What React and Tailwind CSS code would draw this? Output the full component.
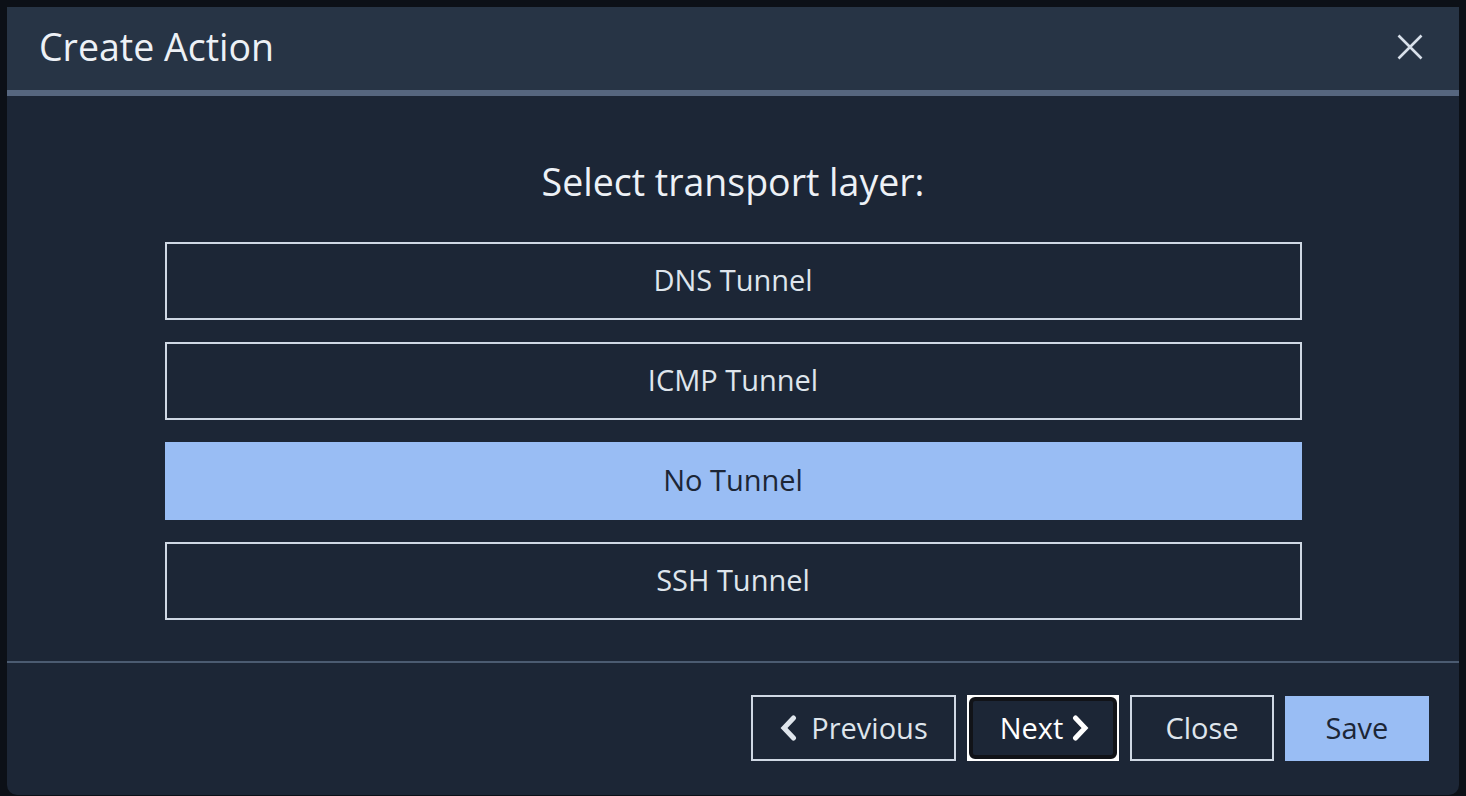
import React, { useState } from 'react';

const options = ['DNS Tunnel', 'ICMP Tunnel', 'No Tunnel', 'SSH Tunnel'];

const Chevron = ({ dir }) => (
  <svg width="18" height="26" viewBox="0 0 18 26" className="shrink-0">
    <path
      d={dir === 'left' ? 'M14.5 3 5 13 14.5 23' : 'M3.5 3 13 13 3.5 23'}
      stroke="currentColor"
      strokeWidth="5"
      strokeLinejoin="miter"
      strokeLinecap="round"
      fill="none"
    />
  </svg>
);

const App = () => {
  const [selected, setSelected] = useState('No Tunnel');

  return (
    <div
      className="w-[1466px] h-[796px] overflow-hidden bg-[#0c1017] pt-[7px] pl-[7px]"
      style={{ fontFamily: '"Open Sans", "Noto Sans", sans-serif' }}
    >
      {/* Modal */}
      <div className="w-[1452px] h-[788px] flex flex-col bg-[#1c2636] rounded-b-[10px] overflow-hidden">
        {/* Header */}
        <div className="h-[83px] shrink-0 bg-[#273445] flex items-center justify-between pl-[32px] pr-[36px] pb-[3px]">
          <h1 className="text-[37.5px] leading-none text-[#edf1f6]">Create Action</h1>
          <svg width="26" height="26" viewBox="0 0 26 26" className="text-[#d8e0ea]">
            <path d="M1.5 1.5 24.5 24.5M24.5 1.5 1.5 24.5" stroke="currentColor" strokeWidth="2.6" fill="none" />
          </svg>
        </div>
        <div className="h-[6px] shrink-0 bg-[#56667f]" />

        {/* Body */}
        <div className="flex flex-col items-center pt-[62px] pb-[41px]">
          <h2 className="text-[37.5px] leading-[48px] text-[#edf1f6]">Select transport layer:</h2>
          <div className="mt-[36px] w-[1137px] flex flex-col gap-[22px]">
            {options.map((opt) => (
              <button
                key={opt}
                onClick={() => setSelected(opt)}
                className={
                  selected === opt
                    ? 'h-[78px] w-full flex items-center justify-center pb-[2px] bg-[#99bdf4] text-[#1c2636] text-[29px]'
                    : 'h-[78px] w-full flex items-center justify-center pb-[2px] border-2 border-[#cfd8e4] text-[#dfe5ec] text-[29px]'
                }
              >
                {opt}
              </button>
            ))}
          </div>
        </div>

        {/* Footer */}
        <div className="h-[2px] shrink-0 bg-[#4b5b71]" />
        <div className="flex-1 flex items-center justify-end pr-[30px] pb-[2px] gap-[11px]">
          <button className="w-[205px] h-[66px] border-2 border-[#cfd8e4] flex items-center justify-center gap-[14px] text-[29px] text-[#dfe5ec]">
            <Chevron dir="left" />
            <span>Previous</span>
          </button>
          <div className="w-[152px] h-[66px] bg-white p-[2px]">
            <button className="w-full h-full rounded-[6px] border-[4px] border-[#111318] bg-[#1c2636] flex items-center justify-center gap-[9px] pl-[4px] text-[29px] text-white">
              <span>Next</span>
              <Chevron dir="right" />
            </button>
          </div>
          <button className="w-[144px] h-[66px] border-2 border-[#cfd8e4] flex items-center justify-center text-[29px] text-[#dfe5ec]">
            Close
          </button>
          <button className="w-[144px] h-[65px] bg-[#99bdf4] flex items-center justify-center text-[29px] text-[#1c2636]">
            Save
          </button>
        </div>
      </div>
    </div>
  );
};

export default App;
